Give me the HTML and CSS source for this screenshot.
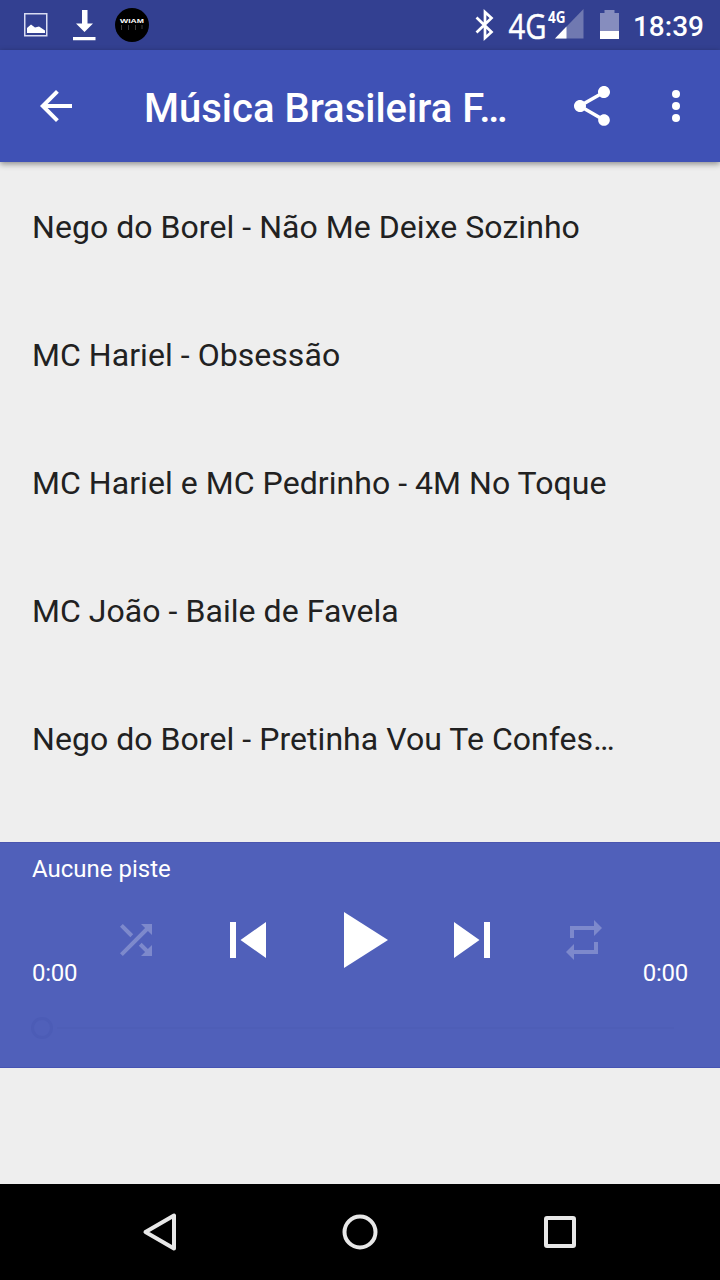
FILE: index.html
```html
<!DOCTYPE html>
<html lang="fr">
<head>
<meta charset="utf-8">
<title>Música Brasileira</title>
<link rel="stylesheet" href="styles.css">
</head>
<body>
<div class="screen">
  <div class="status-bar">
    <svg class="status-notifications" width="160" height="50" viewBox="0 0 160 50">
      <rect x="24.750" y="13.750" width="22" height="22" fill="none" stroke="#d9dcf2" stroke-width="1.500"/>
      <path d="M27 33v-5l4-3.500 4 3 4-1 6 4V33z" fill="#fff"/>
      <path d="M82 10h5.500v13.500H93L84.500 32 76 23.500h6zM73 37h22.500v3.300H73z" fill="#fff"/>
      <circle cx="132" cy="25" r="17" fill="#000"/>
      <text class="badge-text" x="120" y="23" textLength="24" lengthAdjust="spacingAndGlyphs">WIAM</text>
      <path d="M121.500 25v5M128.500 25v5M135.500 25v5M142 25v4" stroke="#3c3c3c" stroke-width="1"/>
    </svg>
    <div class="status-system">
      <svg width="152" height="50" viewBox="469 0 152 50">
        <path d="M476.500 17.500l15 14.500-6.500 6V12l6.500 6-15 14.500" fill="none" stroke="#fff" stroke-width="2.700"/>
        <path d="M583.500 9v29.500H555z" fill="#7079b1"/>
        <path d="M566.500 26.500v12H555z" fill="#fff"/>
        <text class="net-large" x="508.500" y="38.500" textLength="38" lengthAdjust="spacingAndGlyphs">4G</text>
        <text class="net-small" x="548" y="22.500" textLength="17.500" lengthAdjust="spacingAndGlyphs">4G</text>
        <path d="M604.500 10h10v3h4.500v18h-19V13h4.500z" fill="#868dbe"/>
        <path d="M600 31h19v8h-19z" fill="#fff"/>
      </svg>
      <span class="clock">18:39</span>
    </div>
  </div>

  <header class="app-bar">
    <svg class="icon" viewBox="0 0 24 24"><path d="M20 11H7.830l5.590-5.590L12 4l-8 8 8 8 1.410-1.410L7.830 13H20v-2z"/></svg>
    <h1 class="title">Música Brasileira F…</h1>
    <svg class="icon" viewBox="0 0 24 24"><path d="M18 16.080c-.760 0-1.440.300-1.960.770L8.910 12.700c.050-.230.090-.460.090-.700s-.040-.470-.090-.700l7.050-4.110c.540.500 1.250.810 2.040.810 1.660 0 3-1.340 3-3s-1.340-3-3-3-3 1.340-3 3c0 .240.040.470.090.700L8.040 9.810C7.500 9.310 6.790 9 6 9c-1.660 0-3 1.340-3 3s1.340 3 3 3c.790 0 1.500-.310 2.040-.810l7.120 4.160c-.050.210-.080.430-.080.650 0 1.610 1.310 2.920 2.920 2.920s2.920-1.310 2.920-2.920-1.310-2.920-2.920-2.920z"/></svg>
    <svg class="icon overflow" viewBox="0 0 24 24"><circle cx="12" cy="6" r="2"/><circle cx="12" cy="12" r="2"/><circle cx="12" cy="18" r="2"/></svg>
  </header>

  <ul class="tracks">
    <li class="track">Nego do Borel - Não Me Deixe Sozinho</li>
    <li class="track">MC Hariel - Obsessão</li>
    <li class="track">MC Hariel e MC Pedrinho - 4M No Toque</li>
    <li class="track">MC João - Baile de Favela</li>
    <li class="track">Nego do Borel - Pretinha Vou Te Confes…</li>
  </ul>

  <section class="player">
    <div class="now-playing">Aucune piste</div>
    <div class="transport">
      <span class="time">0:00</span>
      <div class="controls">
        <svg class="icon dim" viewBox="0 0 24 24"><path d="M10.590 9.170L5.410 4 4 5.410l5.170 5.170 1.420-1.410zM14.500 4l2.040 2.040L4 18.590 5.410 20 17.960 7.460 20 9.500V4h-5.500zm.330 9.410l-1.410 1.410 3.130 3.130L14.500 20H20v-5.500l-2.040 2.040-3.130-3.130z"/></svg>
        <svg class="icon skip" viewBox="0 0 24 24"><path d="M6 6h2v12H6zm3.500 6l8.500 6V6z"/></svg>
        <svg class="icon play" viewBox="0 0 24 24"><path d="M8 5v14l11-7z"/></svg>
        <svg class="icon skip" viewBox="0 0 24 24"><path d="M6 18l8.500-6L6 6v12zM16 6v12h2V6h-2z"/></svg>
        <svg class="icon dim" viewBox="0 0 24 24"><path d="M7 7h10v3l4-4-4-4v3H5v6h2V7zm10 10H7v-3l-4 4 4 4v-3h12v-6h-2v4z"/></svg>
      </div>
      <span class="time">0:00</span>
    </div>
    <div class="seek"><span class="thumb"></span><span class="rail"></span></div>
  </section>

  <div class="spacer"></div>

  <nav class="nav-bar">
    <svg width="48" height="48" viewBox="0 0 48 48"><path d="M38 7.500v33L9.500 24z"/></svg>
    <svg width="48" height="48" viewBox="0 0 48 48"><circle cx="24" cy="24" r="15.500"/></svg>
    <svg width="48" height="48" viewBox="0 0 48 48"><rect x="10" y="10" width="28" height="28" rx="1"/></svg>
  </nav>
</div>
</body>
</html>
```
FILE: styles.css
```css
* { box-sizing: border-box; }
body {
  margin: 0;
  font-family: Roboto, "Noto Sans", sans-serif;
  background: #eee;
}
.screen {
  width: 720px;
  height: 1280px;
  display: flex;
  flex-direction: column;
  overflow: hidden;
}
.status-bar {
  height: 50px;
  flex: none;
  display: flex;
  justify-content: space-between;
  background: #334091;
}
.status-system {
  display: flex;
  align-items: center;
  padding-right: 16px;
  gap: 12px;
}
.clock {
  color: #fff;
  font-size: 28px;
  font-weight: 500;
  line-height: 32px;
  padding-top: 4px;
}
.badge-text { font: 700 6px "Liberation Sans", sans-serif; fill: #fff; }
.net-large {
  font: 400 35px "Open Sans", sans-serif;
  fill: #fff;
  stroke: #fff;
  stroke-width: .5;
}
.net-small { font: 700 16px "Open Sans", sans-serif; fill: #fff; }

.app-bar {
  height: 112px;
  flex: none;
  display: flex;
  align-items: center;
  padding: 0 20px 0 32px;
  background: #3f51b5;
  box-shadow: 0 2px 6px rgba(0, 0, 0, .42);
}
.title {
  flex: 1;
  margin: 6px 0 0 64px;
  color: #fff;
  font-size: 40px;
  font-weight: 500;
  line-height: 48px;
  white-space: nowrap;
}
.icon {
  width: 48px;
  height: 48px;
  flex: none;
  fill: #fff;
}
.overflow { margin-left: 36px; }

.tracks {
  height: 680px;
  flex: none;
  margin: 0;
  padding: 1px 32px 0;
  list-style: none;
}
.track {
  height: 128px;
  line-height: 128px;
  font-size: 32px;
  letter-spacing: .05px;
  color: #212121;
  white-space: nowrap;
}

.player {
  height: 226px;
  flex: none;
  padding: 10px 32px 0;
  background: #5060ba;
  border-top: 1px solid #4a55af;
  border-bottom: 1px solid #4654b3;
  color: #fff;
  font-size: 24px;
  line-height: 32px;
}
.transport {
  height: 96px;
  margin-top: 7px;
  display: flex;
  justify-content: space-between;
  align-items: flex-end;
}
.time {
  width: 48px;
  line-height: 30px;
  letter-spacing: -.25px;
}
.time:last-child { text-align: right; }
.controls {
  height: 96px;
  display: grid;
  grid-template-columns: repeat(5, 112px);
  place-items: center;
}
.dim { opacity: .26; }
.skip { width: 72px; height: 72px; }
.play { width: 96px; height: 96px; }
.seek {
  height: 24px;
  margin-top: 28px;
  display: flex;
  align-items: center;
  gap: 4px;
  padding-right: 14px;
}
.thumb {
  width: 22px;
  height: 22px;
  margin-left: -1px;
  border: 3px solid #4c5cb6;
  border-radius: 50%;
}
.rail { flex: 1; height: 2px; background: #4e5eb7; }

.spacer { flex: 1; }
.nav-bar {
  height: 96px;
  flex: none;
  display: flex;
  justify-content: center;
  align-items: center;
  gap: 152px;
  background: #000;
}
.nav-bar svg {
  fill: none;
  stroke: #e8e8e8;
  stroke-width: 4;
  stroke-linejoin: round;
}
```
